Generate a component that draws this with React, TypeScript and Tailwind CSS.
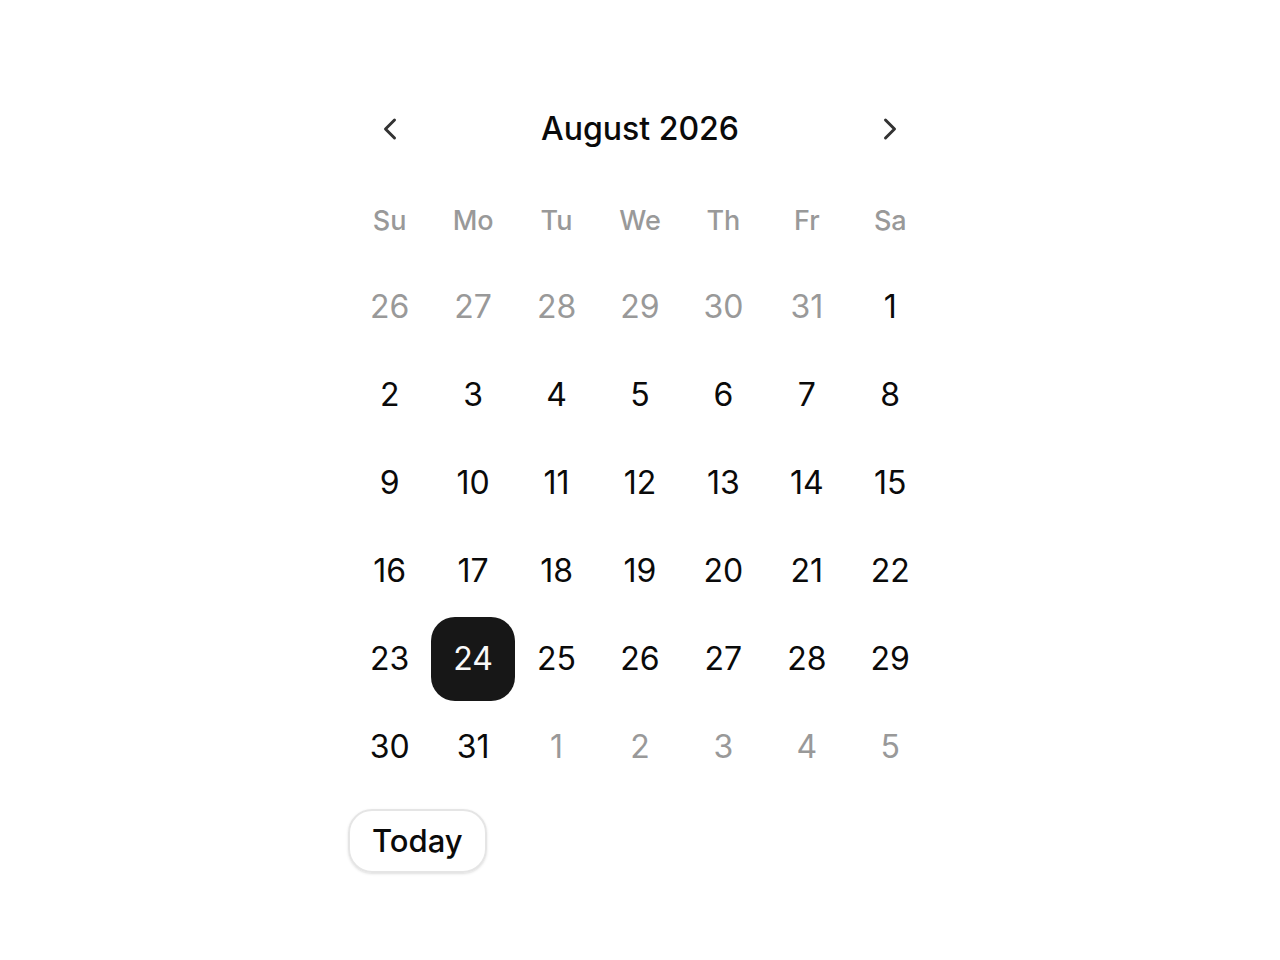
import { useState } from "react";
import { ChevronLeft, ChevronRight } from "lucide-react";

const WEEKDAYS = [
  ["Su", "Sunday"],
  ["Mo", "Monday"],
  ["Tu", "Tuesday"],
  ["We", "Wednesday"],
  ["Th", "Thursday"],
  ["Fr", "Friday"],
  ["Sa", "Saturday"],
];
const TODAY = new Date(2026, 7, 24);

function buildWeeks(month: Date): Date[][] {
  const first = new Date(month.getFullYear(), month.getMonth(), 1);
  const offset = first.getDay();
  const days = new Date(month.getFullYear(), month.getMonth() + 1, 0).getDate();
  const count = Math.ceil((offset + days) / 7);
  return Array.from({ length: count }, (_, w) =>
    Array.from(
      { length: 7 },
      (_, d) => new Date(month.getFullYear(), month.getMonth(), 1 - offset + w * 7 + d),
    ),
  );
}

export default function App() {
  const [month, setMonth] = useState(new Date(2026, 7, 1));
  const [selected, setSelected] = useState(TODAY);
  const move = (step: number) =>
    setMonth(new Date(month.getFullYear(), month.getMonth() + step, 1));

  return (
    <main className="flex min-h-screen items-center justify-center bg-white pt-0.5 font-['Inter',sans-serif] text-[#0a0a0a]">
      <div className="flex w-full max-w-[584px] flex-col items-start">
        <header className="flex h-20 w-full items-center justify-between">
          <button
            type="button"
            aria-label="Previous month"
            onClick={() => move(-1)}
            className="flex size-[84px] items-center justify-center rounded-3xl text-[#333333]"
          >
            <ChevronLeft className="size-9" />
          </button>
          <h1 className="text-[32px] leading-10 font-medium">
            {month.toLocaleDateString("en-US", { month: "long", year: "numeric" })}
          </h1>
          <button
            type="button"
            aria-label="Next month"
            onClick={() => move(1)}
            className="flex size-[84px] items-center justify-center rounded-3xl text-[#333333]"
          >
            <ChevronRight className="size-9" />
          </button>
        </header>
        <table className="mt-3 w-full table-fixed border-collapse">
          <thead>
            <tr>
              {WEEKDAYS.map(([short, long]) => (
                <th
                  key={short}
                  scope="col"
                  abbr={long}
                  className="h-20 p-0 text-[27px] leading-10 font-medium text-[#999999]"
                >
                  {short}
                </th>
              ))}
            </tr>
          </thead>
          <tbody>
            {buildWeeks(month).map((week) => (
              <tr key={week[0].toDateString()}>
                {week.map((day) => {
                  const active = day.toDateString() === selected.toDateString();
                  const outside = day.getMonth() !== month.getMonth();
                  return (
                    <td key={day.toDateString()} className="p-0 pt-1">
                      <button
                        type="button"
                        aria-pressed={active}
                        onClick={() => setSelected(day)}
                        className={`flex h-[84px] w-full items-center justify-center rounded-3xl text-[32px] leading-10 ${
                          active ? "bg-[#171717] text-[#fafafa]" : outside ? "text-[#999999]" : ""
                        }`}
                      >
                        {day.getDate()}
                      </button>
                    </td>
                  );
                })}
              </tr>
            ))}
          </tbody>
        </table>
        <button
          type="button"
          onClick={() => {
            setMonth(new Date(2026, 7, 1));
            setSelected(TODAY);
          }}
          className="mt-5 flex h-16 items-center rounded-3xl border-2 border-[#e5e5e5] px-[22px] text-[31px] leading-10 font-medium shadow-sm"
        >
          Today
        </button>
      </div>
    </main>
  );
}
